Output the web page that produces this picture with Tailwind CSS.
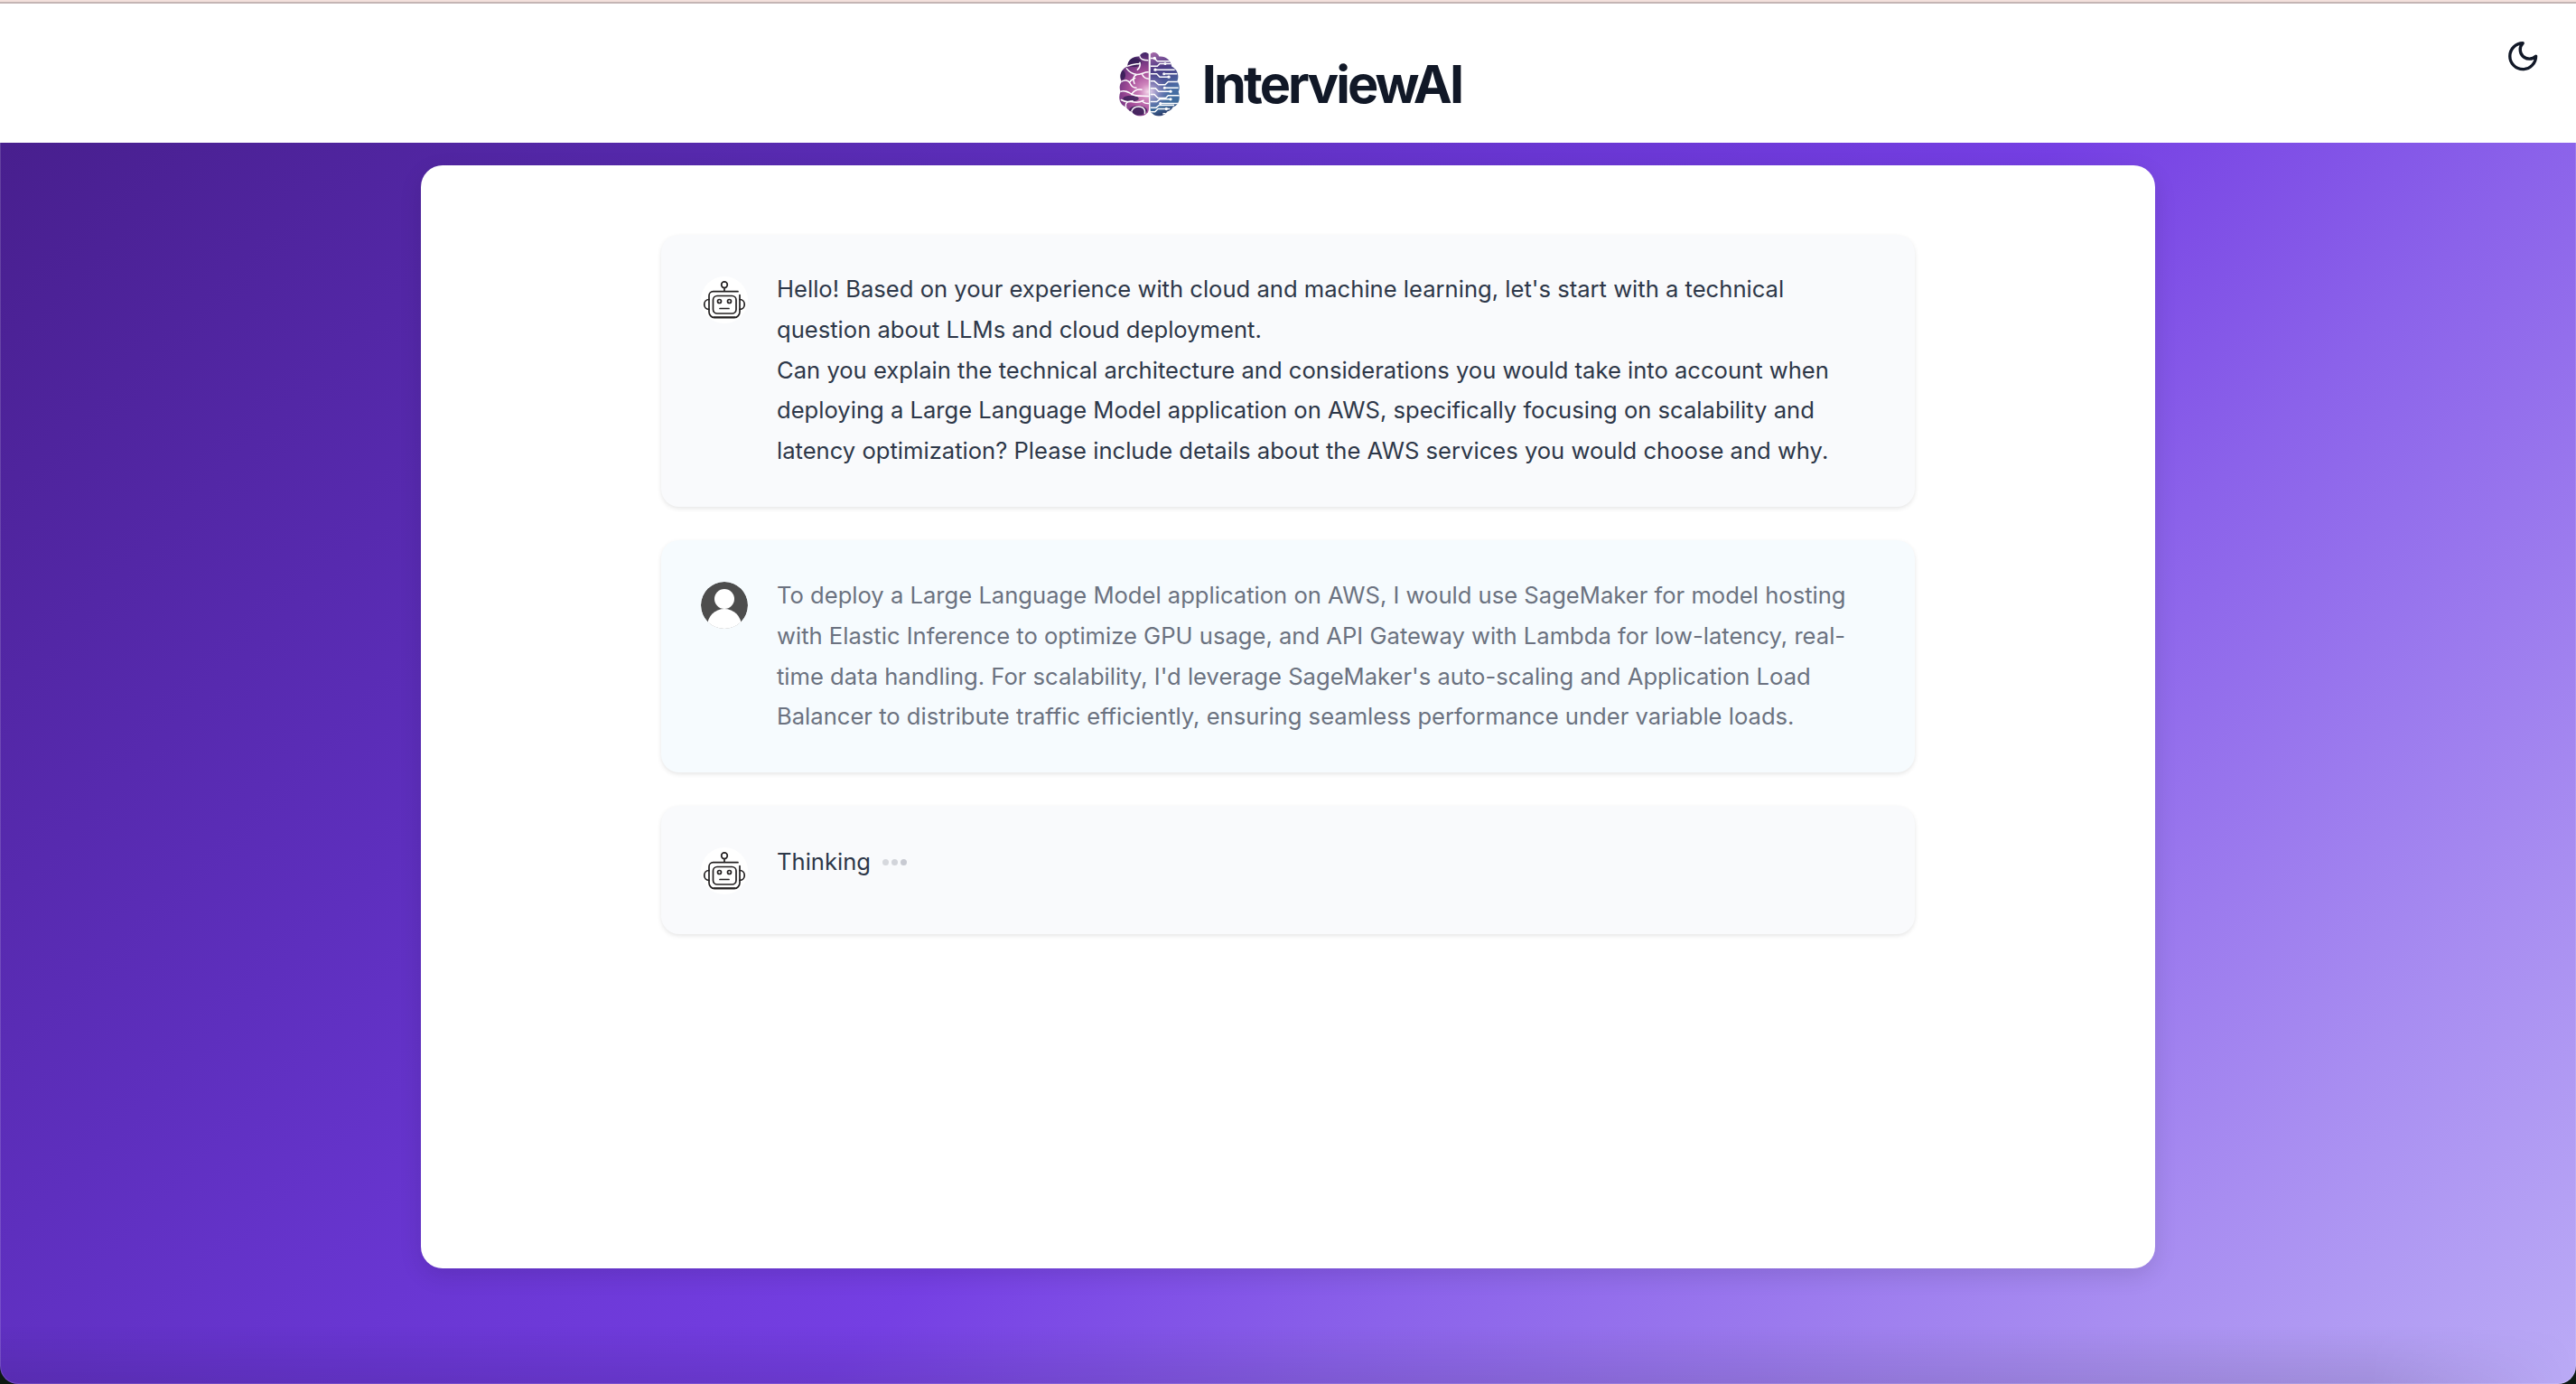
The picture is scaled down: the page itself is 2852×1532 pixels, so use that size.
<!DOCTYPE html>
<html lang="en">
<head>
<meta charset="utf-8">
<title>InterviewAI</title>
<script src="https://cdn.jsdelivr.net/npm/@tailwindcss/browser@4"></script>
</head>
<body class="h-screen overflow-hidden bg-[#0d1a12] font-[Inter,sans-serif]">
<svg class="hidden">
  <symbol id="robot" viewBox="0 0 52 52">
    <circle cx="26" cy="26" r="26" fill="#fff"/>
    <g fill="none" stroke="#232021" stroke-width="1.7" stroke-linecap="round">
      <circle cx="26" cy="9.200" r="3.300"/><path d="M26 12.800v3.200"/>
      <path d="M41 16.700H13.500a4.500 4.500 0 0 0-4.500 4.500v18a6.500 6.500 0 0 0 6 6.500h22a6.500 6.500 0 0 0 6-6.500V20.500"/>
      <rect x="13.500" y="21.500" width="25.500" height="19.500" rx="4.500"/>
      <circle cx="20.500" cy="27.500" r="2"/><circle cx="31.500" cy="27.500" r="2"/>
      <path d="M21 35.500h10M9 25.500c-7 0-7 11 0 11M43 25.500c7 0 7 11 0 11M14.500 45.200h23"/>
    </g>
  </symbol>
</svg>
<div class="relative flex h-screen flex-col overflow-hidden rounded-b-[20px]">
  <div class="h-[2px] shrink-0 bg-[#f3e0dc]"></div>
  <div class="h-[2px] shrink-0 bg-[#c4b5b4]"></div>
  <header class="relative flex h-[154px] shrink-0 items-center justify-center bg-white pt-[24px]">
    <div class="flex items-center gap-[25px] pl-[5px]">
      <svg class="h-[72px] w-[67px]" viewBox="27 22 201 215">
        <defs>
          <radialGradient id="lg" gradientUnits="userSpaceOnUse" cx="122" cy="155" r="125"><stop offset="0" stop-color="#f3d6ea"/><stop offset=".2" stop-color="#cf86bd"/><stop offset=".5" stop-color="#a84f9a"/><stop offset=".75" stop-color="#7d3a86"/><stop offset="1" stop-color="#4a2a6c"/></radialGradient>
          <linearGradient id="rg" gradientUnits="userSpaceOnUse" x1="140" y1="25" x2="215" y2="235"><stop offset="0" stop-color="#a468a8"/><stop offset=".25" stop-color="#4c3a84"/><stop offset=".6" stop-color="#4a6fa6"/><stop offset=".8" stop-color="#3f6c9c"/><stop offset="1" stop-color="#1f1f4c"/></linearGradient>
          <radialGradient id="glow" gradientUnits="userSpaceOnUse" cx="132" cy="155" r="60"><stop offset="0" stop-color="#e9d3ee" stop-opacity=".9"/><stop offset="1" stop-color="#8a6db8" stop-opacity="0"/></radialGradient>
          <clipPath id="left"><path d="M125 30C117 20 99 24 95 38 74 36 56 48 54 72 34 80 26 102 35 122 26 136 29 148 32 154 22 176 30 200 50 206 56 216 62 219 69 221 80 240 108 240 118 228 125 224 126 215 126 205Z"/></clipPath>
          <clipPath id="right"><path d="M131 30C139 20 156 24 160 38 181 36 198 48 202 72 220 80 228 102 220 120 230 136 228 148 224 154 232 176 226 200 206 206 202 214 196 219 187 221 176 240 148 240 138 228 131 224 130 215 130 205Z"/></clipPath>
        </defs>
        <g clip-path="url(#left)">
          <path fill="url(#lg)" d="M20 20h108v220H20z"/>
          <g fill="#2e1b50" opacity=".75"><ellipse cx="78" cy="58" rx="23" ry="15"/><ellipse cx="66" cy="178" rx="26" ry="10"/><ellipse cx="90" cy="217" rx="30" ry="16"/><ellipse cx="38" cy="100" rx="10" ry="16"/></g>
          <path fill="none" stroke="#fff" stroke-width="4.500" stroke-linecap="round" d="M95 36c2 10 12 15 28 15M56 70c14-6 24-6 38-8M96 58c2 12-2 20-8 24M52 78c10 14 20 18 34 20 14 0 24-8 38-8M86 98c-12 4-14 14-8 30M104 98c4 10 10 14 22 14M34 122c12-8 24-6 30 6 4 10 12 14 20 14M62 124c4-10 12-10 18-14M32 154c16-4 26 2 38 10 16 8 34 4 54 6M68 164c10-16 22-18 34-16M50 206c-4-14 6-20 18-18 14 4 26 4 40-4M68 221c4-12 16-18 30-16 12 2 16 12 14 22M34 182c14 8 26 8 38 4M104 186c4 6 12 8 20 8"/>
        </g>
        <g clip-path="url(#right)">
          <path fill="url(#rg)" d="M128 20h108v220H128z"/>
          <path fill="url(#glow)" d="M128 20h108v220H128z"/>
          <g fill="none" stroke="#fff" stroke-width="4.500">
            <path d="M130 44h14l10 10h52M130 70h24l8-8h46M146 82h66M130 96h22l10 10h30M176 96h44M130 120h14l14 12h22l10-10h40M130 144h18l10 10h40M178 142h46M130 164h14l12 12h26l8-8h44M130 188h22l10-8h36M164 194h60M130 208h20l10-8h50M130 222h16l10-10h40M172 228h30"/>
          </g>
          <g fill="#fff"><circle cx="145" cy="44" r="5"/><circle cx="180" cy="62" r="4.500"/><circle cx="147" cy="82" r="5"/><circle cx="192" cy="106" r="5"/><circle cx="176" cy="96" r="4.500"/><circle cx="198" cy="154" r="5"/><circle cx="178" cy="142" r="4.500"/><circle cx="198" cy="180" r="5"/><circle cx="164" cy="194" r="4.500"/><circle cx="184" cy="212" r="5"/></g>
        </g>
      </svg>
      <h1 class="pt-px text-[57.6px] font-bold leading-none tracking-tighter text-[#111827]">InterviewAI</h1>
    </div>
    <svg class="absolute right-[39.500px] top-[38.500px] size-[38.400px]" viewBox="0 0 24 24" fill="none" stroke="#111827" stroke-width="2.100" stroke-linecap="round" stroke-linejoin="round"><path d="M12 3a6 6 0 0 0 9 9 9 9 0 1 1-9-9Z"/></svg>
  </header>
  <main class="flex flex-1 flex-col items-center bg-[linear-gradient(135deg,#481f8e_0%,#5e2fbe_29%,#6936d2_40.5%,#753fe3_54%,#8b62ea_67%,#a88df1_86%,#bbabf6_100%)] pt-[25px]">
    <section class="flex h-[1221px] w-[1920px] flex-col items-center gap-[37px] rounded-[24px] bg-white pt-[77px] shadow-[0_8px_26px_rgba(0,0,0,0.11)]">
      <article class="flex h-[301px] w-[1388px] gap-[32px] rounded-[20px] bg-[#f9fafc] px-[44px] pt-[38px] shadow-[0_2px_5px_rgba(0,0,0,0.1)]">
        <svg class="mt-[8px] size-[52px] shrink-0"><use href="#robot"/></svg>
        <p class="whitespace-nowrap text-[25.6px] leading-[44.8px] text-[#2d3748]">Hello! Based on your experience with cloud and machine learning, let's start with a technical<br>question about LLMs and cloud deployment.<br>Can you explain the technical architecture and considerations you would take into account when<br>deploying a Large Language Model application on AWS, specifically focusing on scalability and<br>latency optimization? Please include details about the AWS services you would choose and why.</p>
      </article>
      <article class="flex h-[257px] w-[1388px] gap-[32px] rounded-[20px] bg-[#f6fbfe] px-[44px] pt-[39px] shadow-[0_2px_5px_rgba(0,0,0,0.1)]">
        <svg class="mt-[7px] size-[52px] shrink-0 rounded-full" viewBox="0 0 52 52"><circle cx="26" cy="26" r="26" fill="#4d4d4d"/><circle cx="26" cy="19" r="11" fill="#fff"/><circle cx="26" cy="49" r="19" fill="#fff"/></svg>
        <p class="whitespace-nowrap text-[25.6px] leading-[44.8px] text-[#6b7280]">To deploy a Large Language Model application on AWS, I would use SageMaker for model hosting<br>with Elastic Inference to optimize GPU usage, and API Gateway with Lambda for low-latency, real-<br>time data handling. For scalability, I'd leverage SageMaker's auto-scaling and Application Load<br>Balancer to distribute traffic efficiently, ensuring seamless performance under variable loads.</p>
      </article>
      <article class="flex h-[142px] w-[1388px] gap-[32px] rounded-[20px] bg-[#f9fafc] px-[44px] pt-[40px] shadow-[0_2px_5px_rgba(0,0,0,0.1)]">
        <svg class="mt-[6px] size-[52px] shrink-0"><use href="#robot"/></svg>
        <div class="flex h-[45px] items-center gap-[13px]">
          <p class="text-[25.6px] leading-[44.8px] text-[#2d3748]">Thinking</p>
          <div class="flex gap-[3.500px]"><i class="size-[6.500px] rounded-full bg-[#d6d8dd]"></i><i class="size-[6.500px] rounded-full bg-[#d2d4da]"></i><i class="size-[6.500px] rounded-full bg-[#c8cad2]"></i></div>
        </div>
      </article>
    </section>
  </main>
  <!-- soft shade along the window's bottom edge -->
  <div class="pointer-events-none absolute inset-x-0 bottom-0 h-[64px] bg-linear-to-t from-black/10 to-transparent mask-r-from-92%"></div>
  <div class="pointer-events-none absolute inset-x-0 bottom-0 top-[158px] rounded-b-[20px] border-x border-b border-white/15"></div>
</div>
</body>
</html>
